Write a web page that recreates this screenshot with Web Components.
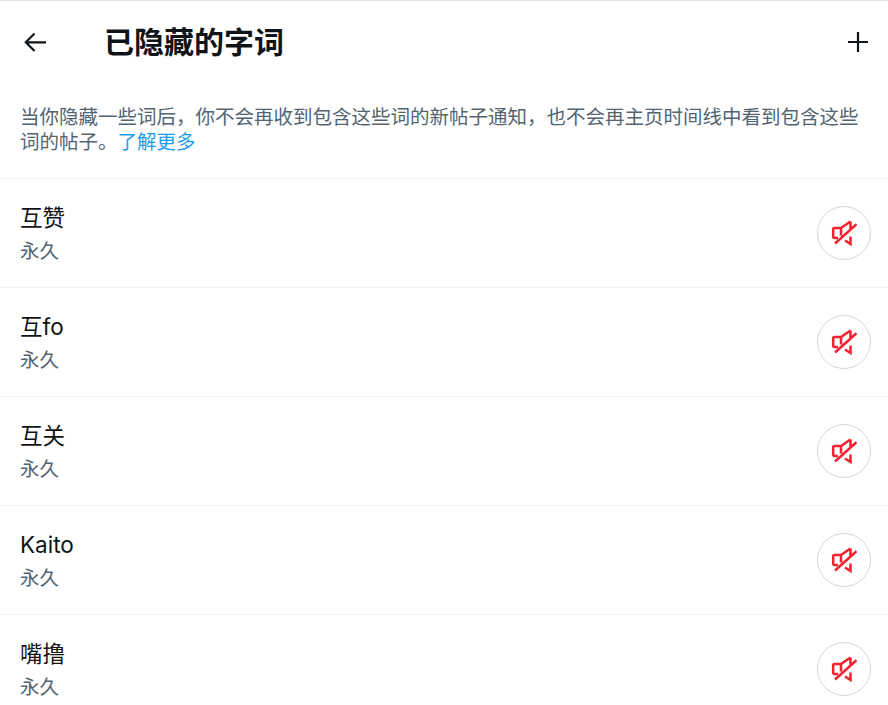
<!DOCTYPE html>
<html lang="zh-CN">
<head>
<meta charset="utf-8">
<style>
	html, body { margin: 0; background: #fff; overflow: hidden; }
	body { font-family: Inter, "Noto Sans CJK SC", sans-serif; color: #0f1419; }
</style>
</head>
<body>
<muted-page>
	<page-header slot="header">已隐藏的字词</page-header>
	<span slot="intro">当你隐藏一些词后，你不会再收到包含这些词的新帖子通知，也不会再主页时间线中看到包含这些词的帖子。<a href="#">了解更多</a></span>
	<muted-word word="互赞"></muted-word>
	<muted-word word="互fo"></muted-word>
	<muted-word word="互关"></muted-word>
	<muted-word word="Kaito"></muted-word>
	<muted-word word="嘴撸"></muted-word>
</muted-page>
<script>
{
	class MutedPage extends HTMLElement {
		constructor(){
			super();
			this.attachShadow({ mode: "open" });
			this.shadowRoot.innerHTML = `
				<style>
					:host {
						display: block;
						height: 705px;
						overflow: hidden;
						border-top: 1px solid #e1e1e1;
						box-sizing: border-box;
					}
					#intro {
						padding: 22px 20px 23px;
						font-size: 19.5px;
						line-height: 25px;
						color: #536471;
						border-bottom: 1px solid #eff3f4;
					}
					::slotted(span) { display: block; }
				</style>
				<slot name="header"></slot>
				<div id="intro"><slot name="intro"></slot></div>
				<slot></slot>
			`;
		}
		connectedCallback(){
			// the link lives in light DOM, colour it from here
			const link = this.querySelector("a");
			if (link){
				link.style.color = "#1d9bf0";
				link.style.textDecoration = "none";
			}
		}
	}
	customElements.define("muted-page", MutedPage);

	class PageHeader extends HTMLElement {
		constructor(){
			super();
			this.attachShadow({ mode: "open" });
			this.shadowRoot.innerHTML = `
				<style>
					:host {
						display: flex;
						align-items: center;
						height: 82px;
						padding: 0 16px 0 21px;
					}
					svg { display: block; flex: none; fill: none; stroke: currentColor; stroke-width: 2.2; }
					#title {
						flex: 1;
						margin-left: 55px;
						font-size: 30px;
						font-weight: 700;
						line-height: 36px;
					}
				</style>
				<svg width="28" height="28" viewBox="0 0 28 28"><path d="M25 14.3H5.5M13.5 5.5L4.8 14.3L13.5 23"/></svg>
				<div id="title"><slot></slot></div>
				<svg width="28" height="28" viewBox="0 0 28 28"><path d="M4 14H24M14 4V24"/></svg>
			`;
		}
	}
	customElements.define("page-header", PageHeader);

	class MutedWord extends HTMLElement {
		constructor(){
			super();
			this.attachShadow({ mode: "open" });
			this.shadowRoot.innerHTML = `
				<style>
					:host {
						display: flex;
						align-items: center;
						justify-content: space-between;
						height: 109px;
						box-sizing: border-box;
						padding: 0 17px 0 20px;
						border-bottom: 1px solid #eff3f4;
					}
					#text { padding-top: 3px; }
					#word { font-size: 22.5px; line-height: 26px; }
					#duration { margin-top: 7px; font-size: 19.5px; line-height: 26px; color: #536471; }
					#unmute {
						display: flex;
						align-items: center;
						justify-content: center;
						width: 54px;
						height: 54px;
						box-sizing: border-box;
						border: 1px solid #cfd9de;
						border-radius: 50%;
					}
					svg { display: block; fill: none; stroke: #f4212e; stroke-width: 2.5; }
				</style>
				<div id="text">
					<div id="word"></div>
					<div id="duration">永久</div>
				</div>
				<div id="unmute">
					<svg width="26" height="26" viewBox="0 0 26 26">
						<path d="M19.5 1.5L10 8H3.5Q2.2 8 2.2 9.5V16.5Q2.2 18 3.5 18H7M10 8V15.5M19.5 1.5V9.5M25.5 4.2L4 23.5M14 20.5L19.5 24V16.5"/>
					</svg>
				</div>
			`;
		}
		connectedCallback(){
			this.shadowRoot.querySelector("#word").textContent = this.getAttribute("word");
		}
	}
	customElements.define("muted-word", MutedWord);
}
</script>
</body>
</html>
